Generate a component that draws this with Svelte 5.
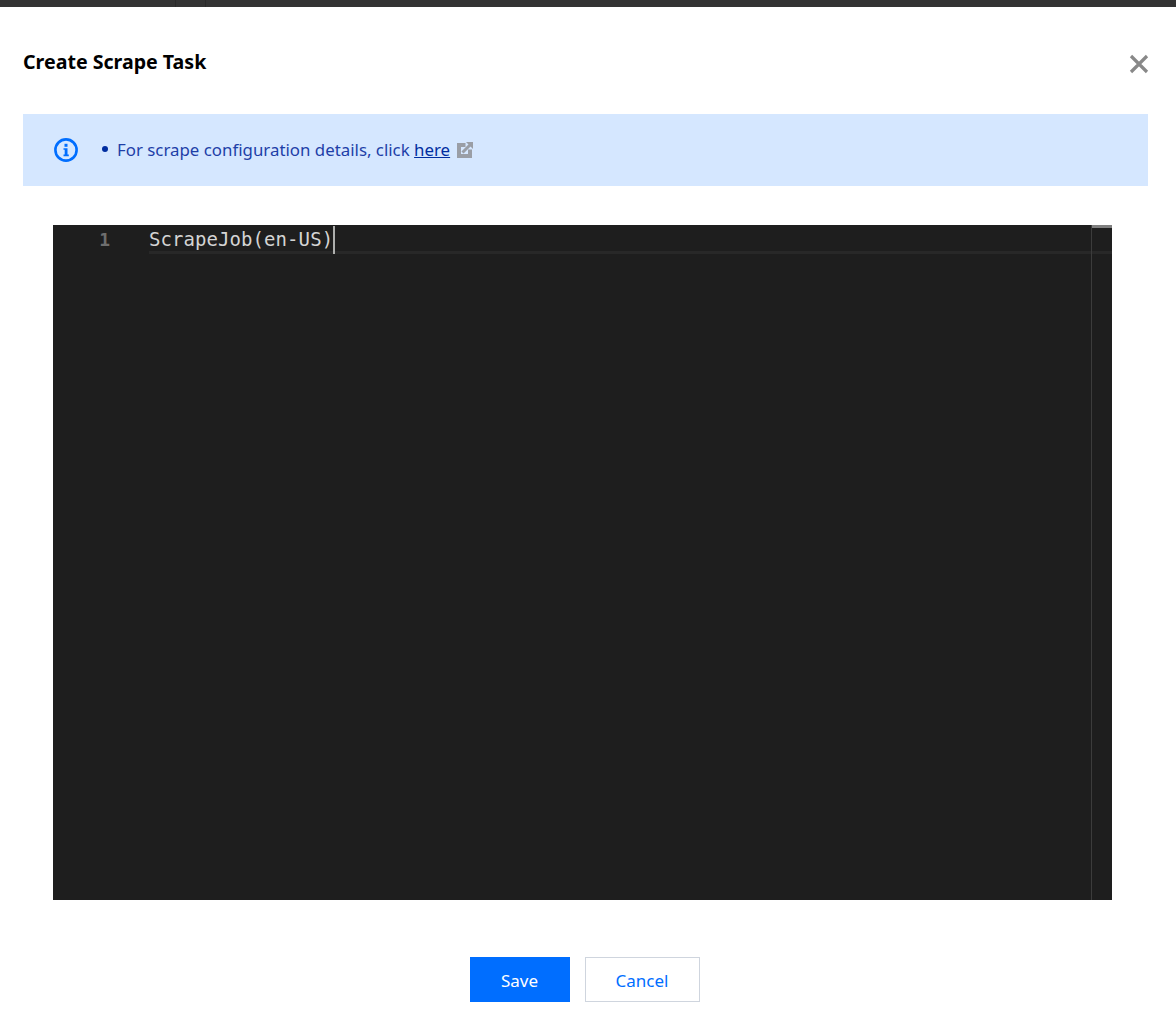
<script>
  const title = 'Create Scrape Task';
</script>

<div class="page">
  <div class="topbar"><span class="seg one"></span><span class="seg two"></span></div>
  <div class="dialog">
    <header class="head">
      <h2>{title}</h2>
      <button class="close" aria-label="Close">
        <svg width="20" height="20" viewBox="0 0 20 20"><path d="M2 2 L18 18 M18 2 L2 18" stroke="#888" stroke-width="3.2" fill="none"/></svg>
      </button>
    </header>
    <div class="alert">
      <svg class="info" width="24" height="24" viewBox="0 0 24 24">
        <circle cx="12" cy="12" r="10.6" fill="none" stroke="#006eff" stroke-width="2.6"/>
        <rect x="10.5" y="5.800" width="3" height="3" fill="#006eff"/>
        <path d="M9.500 10.200h4v6.400h1.300v1.600H9.500v-1.600h1.200v-4.800H9.500z" fill="#006eff"/>
      </svg>
      <span class="bullet"></span>
      <span class="msg">For scrape configuration details, click <a href="#here">here</a></span>
      <svg class="ext" width="16" height="16" viewBox="0 0 16 16">
        <path d="M8.500 3H2v11h11V7.500" fill="none" stroke="#9a9ea6" stroke-width="4"/>
        <path d="M5.500 10.500 L13 3" fill="none" stroke="#9a9ea6" stroke-width="3"/>
        <path d="M9 0H16V7z" fill="#9a9ea6"/>
      </svg>
    </div>
    <div class="editor">
      <div class="gutter">1</div>
      <div class="lines">
        <div class="line"><span class="code">ScrapeJob(en-US)</span><span class="cursor"></span></div>
      </div>
      <div class="ruler"><span class="thumb"></span></div>
    </div>
    <footer class="foot">
      <button class="btn primary">Save</button>
      <button class="btn ghost">Cancel</button>
    </footer>
  </div>
</div>

<style>
  :global(body) { margin: 0; background: #fff; }
  .page { width: 1176px; height: 1023px; overflow: hidden; display: flex; flex-direction: column; font-family: "Noto Sans", "Open Sans", sans-serif; }
  .topbar { height: 7px; background: #333; display: flex; flex: none; }
  .seg { display: block; height: 7px; }
  .one { width: 175px; border-right: 1px solid #2a2a2a; }
  .two { width: 29px; border-right: 1px solid #2a2a2a; }
  .dialog { flex: 1; display: flex; flex-direction: column; padding: 0 27px 0 23px; }
  .head { height: 107px; flex: none; display: flex; justify-content: space-between; align-items: flex-start; }
  h2 { margin: 41px 0 0; font-size: 19.6px; line-height: 28px; font-weight: 700; color: #000; }
  .close { border: 0; background: none; padding: 0; width: 20px; height: 20px; margin: 47px 0 0 0; display: flex; }
  .alert { height: 72px; flex: none; background: #d5e7ff; display: flex; align-items: center; color: #1e3fa8; font-size: 16.85px; margin-right: 1px; }
  .info { margin-left: 31px; flex: none; }
  .bullet { width: 6px; height: 6px; border-radius: 50%; background: #002da0; margin: -3px 0 0 24px; flex: none; }
  .msg { margin: -2px 0 0 9px; }
  .msg a { color: #002da0; }
  .ext { margin-left: 7px; flex: none; }
  .editor { margin: 39px 37px 0 30px; height: 675px; flex: none; background: #1e1e1e; position: relative; display: flex; font-family: "DejaVu Sans Mono", monospace; font-size: 19px; }
  .gutter { width: 57px; flex: none; text-align: right; color: #6e6e6e; line-height: 28px; padding-top: 1px; font-weight: 700; font-size: 18px; }
  .lines { flex: 1; margin: 0 0 0 39px; }
  .line { height: 25px; margin-top: 1px; border-bottom: 3px solid #282828; display: flex; line-height: 27px; color: #d4d4d4; letter-spacing: 0.07px; }
  .cursor { width: 2px; height: 28px; background: #aeafad; }
  .ruler { position: absolute; top: 0; right: 0; bottom: 0; width: 20px; border-left: 1px solid #3c3c3c; }
  .thumb { display: block; height: 3px; background: #808080; }
  .foot { display: flex; justify-content: center; gap: 15px; margin: 57px 3px 0 0; }
  .btn { height: 45px; font-family: inherit; font-size: 17px; padding: 1px 0 0; }
  .primary { width: 100px; background: #006eff; border: 0; color: #fff; }
  .ghost { width: 115px; background: #fff; border: 1px solid #cfd5de; color: #006eff; }
</style>
